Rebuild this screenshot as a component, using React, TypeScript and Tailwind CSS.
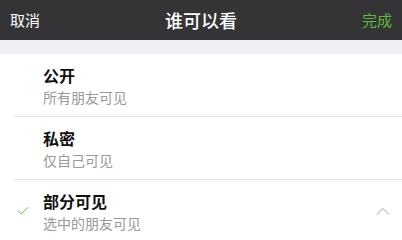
import { Check } from "lucide-react";

const font = {
  fontFamily: '"Noto Sans CJK SC", "Liberation Sans", sans-serif',
};

interface Option {
  title: string;
  desc: string;
  checked?: boolean;
  expand?: boolean;
}

const options: Option[] = [
  { title: "公开", desc: "所有朋友可见" },
  { title: "私密", desc: "仅自己可见" },
  { title: "部分可见", desc: "选中的朋友可见", checked: true, expand: true },
];

export default function App() {
  return (
    <div className="w-[402px] h-[240px] overflow-hidden bg-white" style={font}>
      {/* Nav bar */}
      <div className="h-[40px] bg-[#343437] flex items-center justify-between px-[10px]">
        <span className="text-[15px] text-white">取消</span>
        <span className="text-[18px] text-white font-medium">谁可以看</span>
        <span className="text-[15px] text-[#5fb93b]">完成</span>
      </div>
      <div className="h-[14px] bg-[#efeff4]" />

      {options.map((o, i) => (
        <div key={i} className="relative">
          <div className="h-[62px] flex items-center">
            <div className="w-[43px] flex justify-center pl-[3px]">
              {o.checked && (
                <Check className="w-[14px] h-[14px] text-[#5fb93b]" strokeWidth={1.6} />
              )}
            </div>
            <div className="flex-1 flex flex-col">
              <span className="text-[16px] leading-[22px] font-bold text-[#111]">{o.title}</span>
              <span className="text-[14px] leading-[20px] text-[#999] mt-[1px]">{o.desc}</span>
            </div>
            {o.expand && (
              <svg
                width="14"
                height="8"
                viewBox="0 0 14 8"
                className="mr-[12px]"
                fill="none"
                stroke="#c4c4c4"
                strokeWidth="1.2"
              >
                <path d="M1 7.5 L7 1.5 L13 7.5" />
              </svg>
            )}
          </div>
          {i < options.length - 1 && (
            <div className="ml-[14px] h-px bg-[#e2e2e2]" />
          )}
        </div>
      ))}
    </div>
  );
}
